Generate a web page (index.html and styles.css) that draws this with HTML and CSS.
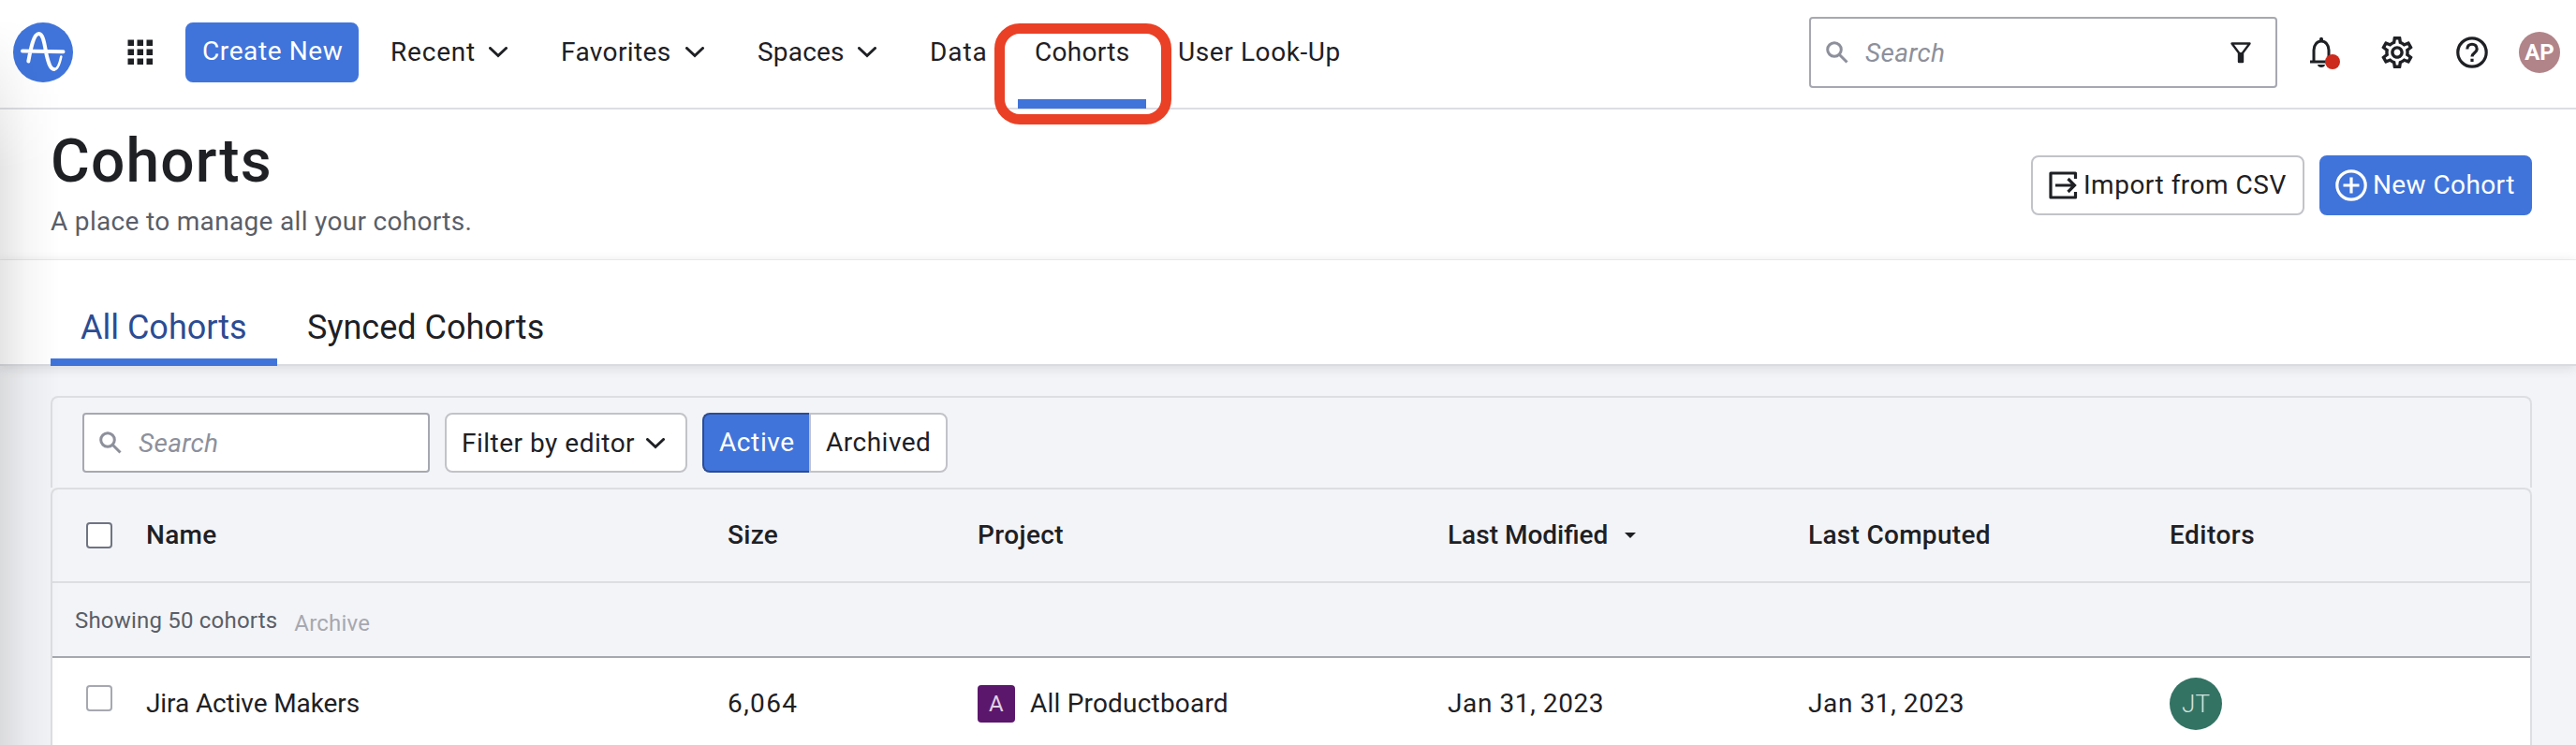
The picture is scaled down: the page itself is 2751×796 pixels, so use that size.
FILE: index.html
```
<!DOCTYPE html>
<html lang="en">

<head>
	<title>Cohorts</title>
	<meta charset="UTF-8">
	<link rel="stylesheet" href="styles.css">
	<meta name="viewport" content="width=device-width, initial-scale=1">
</head>

<body>
	<header class="topbar">
		<svg class="logo" width="64" height="64" viewBox="0 0 64 64">
			<circle cx="32" cy="32" r="32" fill="#4074da" />
			<path d="M10 30.500L53.500 31.300M16.300 41.500C18.500 30 21.500 12 27.500 12C33 12 34 28 36 36C38 44 40 50 43.500 50" fill="none" stroke="#fff" stroke-width="4" stroke-linecap="round" />
			<path d="M43.500 50.500C47.500 50.500 50 43 51.300 36.500" fill="none" stroke="#fff" stroke-width="2.600" stroke-linecap="round" />
		</svg>
		<svg class="apps" width="28" height="28" viewBox="0 0 28 28" fill="#1e2024">
			<path d="M.5.500h6.500v6.500H.5zM10.500.500H17v6.500h-6.500zM20.500.500H27v6.500h-6.500zM.5 10.500H7V17H.5zM10.500 10.500H17V17h-6.500zM20.500 10.500H27V17h-6.500zM.5 20.500H7V27H.5zM10.500 20.500H17V27h-6.500zM20.500 20.500H27V27h-6.500z" />
		</svg>
		<button class="btn btn-primary create">Create New</button>
		<nav class="nav">
			<a class="nav-item recent">Recent <svg class="chevron" width="20" height="12" viewBox="0 0 20 12"><path d="M1.500 1.500L10 9.500L18.500 1.500" /></svg></a>
			<a class="nav-item favorites">Favorites <svg class="chevron" width="20" height="12" viewBox="0 0 20 12"><path d="M1.500 1.500L10 9.500L18.500 1.500" /></svg></a>
			<a class="nav-item spaces">Spaces <svg class="chevron" width="20" height="12" viewBox="0 0 20 12"><path d="M1.500 1.500L10 9.500L18.500 1.500" /></svg></a>
			<a class="nav-item data">Data</a>
			<a class="nav-item current">Cohorts<span class="highlight"></span></a>
			<a class="nav-item lookup">User Look-Up</a>
		</nav>
		<div class="search global-search">
			<svg width="24" height="24" viewBox="0 0 24 24" fill="none" stroke="#8d909b" stroke-width="3"><circle cx="9" cy="9" r="7.300" /><path d="M14 14L22.500 22.500" /></svg>
			<span class="placeholder">Search</span>
			<svg class="funnel" width="24" height="24" viewBox="0 0 24 24"><path d="M2.500 2.500H21.500L14 12.500V22H10V12.500Z" fill="none" stroke="#1e2024" stroke-width="2.400" stroke-linejoin="round" /><path d="M9 12h6v10H9z" fill="#1e2024" /></svg>
		</div>
		<div class="bell">
			<svg width="28" height="34" viewBox="0 0 28 34"><path d="M5 26V14.500C5 9 8.500 5 13 5S21 9 21 14.500V26M1 27H25" fill="none" stroke="#1e2024" stroke-width="3" /><path d="M11 3c0-3 4-3 4 0v3h-4zM9 30h8c0 4-8 4-8 0z" fill="#1e2024" /></svg>
			<span class="dot"></span>
		</div>
		<svg class="gear" width="34" height="34" viewBox="2 2 20 20" fill="#1e2024"><path d="M19.430 12.980c.04-.32.07-.64.07-.98s-.03-.66-.07-.98l2.110-1.650c.19-.15.24-.42.120-.64l-2-3.460c-.12-.22-.39-.3-.61-.22l-2.490 1c-.52-.4-1.080-.73-1.690-.98l-.38-2.650C14.460 2.180 14.250 2 14 2h-4c-.25 0-.46.18-.49.42l-.38 2.650c-.61.25-1.170.59-1.690.98l-2.490-1c-.23-.09-.49 0-.61.22l-2 3.460c-.13.22-.07.49.12.64l2.110 1.650c-.04.32-.07.65-.07.98s.03.66.07.98l-2.110 1.650c-.19.15-.24.42-.12.64l2 3.460c.12.22.39.3.61.22l2.490-1c.52.4 1.080.73 1.690.98l.38 2.650c.03.24.24.42.49.42h4c.25 0 .46-.18.49-.42l.38-2.650c.61-.25 1.170-.59 1.690-.98l2.490 1c.23.09.49 0 .61-.22l2-3.460c.12-.22.07-.49-.12-.64l-2.110-1.650zm-1.980-1.710c.04.31.05.52.05.73s-.02.43-.05.73l-.14 1.130.89.7 1.080.84-.7 1.210-1.270-.51-1.040-.42-.9.68c-.43.32-.84.56-1.250.73l-1.060.43-.16 1.130-.2 1.350h-1.400l-.19-1.350-.16-1.130-1.060-.43c-.43-.18-.83-.41-1.230-.71l-.91-.7-1.060.43-1.270.51-.7-1.210 1.080-.84.89-.7-.14-1.130c-.03-.31-.05-.54-.05-.74s.02-.43.05-.73l.14-1.130-.89-.7-1.080-.84.7-1.210 1.270.51 1.040.42.9-.68c.43-.32.84-.56 1.250-.73l1.060-.43.16-1.130.2-1.350h1.390l.19 1.350.16 1.130 1.060.43c.43.18.83.41 1.230.71l.91.7 1.060-.43 1.270-.51.7 1.210-1.070.85-.89.7.14 1.130zM12 8c-2.210 0-4 1.790-4 4s1.790 4 4 4 4-1.790 4-4-1.790-4-4-4zm0 6c-1.100 0-2-.9-2-2s.9-2 2-2 2 .9 2 2-.9 2-2 2z" /></svg>
		<svg class="help" width="34" height="34" viewBox="0 0 34 34" fill="none" stroke="#1e2024" stroke-width="3.200"><circle cx="17" cy="17" r="15.200" /><path d="M11.800 13.500C11.800 6.500 22.200 6.500 22.200 13.500C22.200 17.500 17 17.500 17 21.500M17 23.700V27" /></svg>
		<span class="avatar me">AP</span>
	</header>

	<section class="page-head">
		<div class="page-title">
			<h1>Cohorts</h1>
			<p>A place to manage all your cohorts.</p>
		</div>
		<button class="btn import">
			<svg width="32" height="32" viewBox="0 0 32 32" fill="none" stroke="#1e2024" stroke-width="3.200"><path d="M29.500 9V3H3V29H29.500V23" stroke-linejoin="round" /><path d="M8 16H28M21.500 9L28.500 16L21.500 23" /></svg>
			<span>Import from CSV</span>
		</button>
		<button class="btn btn-primary new-cohort">
			<svg width="34" height="34" viewBox="0 0 34 34" fill="none" stroke="#fff" stroke-width="3.200"><circle cx="17" cy="17" r="15.200" /><path d="M17 8.500V25.500M8.500 17H25.500" /></svg>
			<span>New Cohort</span>
		</button>
	</section>

	<div class="tabs">
		<a class="tab tab-active">All Cohorts</a>
		<a class="tab">Synced Cohorts</a>
	</div>

	<main class="content">
		<div class="filters">
			<div class="search">
				<svg width="24" height="24" viewBox="0 0 24 24" fill="none" stroke="#8d909b" stroke-width="3"><circle cx="9" cy="9" r="7.300" /><path d="M14 14L22.500 22.500" /></svg>
				<span class="placeholder">Search</span>
			</div>
			<button class="btn by-editor">Filter by editor <svg class="chevron" width="20" height="12" viewBox="0 0 20 12"><path d="M1.500 1.500L10 9.500L18.500 1.500" /></svg></button>
			<div class="segment">
				<button class="btn seg-active">Active</button>
				<button class="btn seg-archived">Archived</button>
			</div>
		</div>

		<div class="table">
			<div class="row table-head">
				<span class="checkbox"></span>
				<span>Name</span>
				<span>Size</span>
				<span class="th-project">Project</span>
				<span class="th-modified">Last Modified <i class="sort"></i></span>
				<span>Last Computed</span>
				<span class="th-editors">Editors</span>
			</div>
			<div class="summary">
				<span>Showing 50 cohorts</span>
				<span class="archive">Archive</span>
			</div>
			<div class="row table-row">
				<span class="checkbox"></span>
				<span class="name">Jira Active Makers</span>
				<span class="size">6,064</span>
				<span class="project"><b class="badge">A</b>All Productboard</span>
				<span class="date">Jan 31, 2023</span>
				<span class="date">Jan 31, 2023</span>
				<span class="avatar editor">JT</span>
			</div>
		</div>
	</main>
	<div class="edge-shadow"></div>
</body>

</html>
```
FILE: styles.css
```
* {
	box-sizing: border-box;
}

body {
	position: relative;
	margin: 0;
	height: 796px;
	overflow: hidden;
	background: #fff;
	color: #1e2024;
	font-family: Roboto, "Liberation Sans", sans-serif;
	font-size: 28px;
	line-height: 40px;
}

svg {
	flex: none;
	display: block;
}

.btn {
	display: flex;
	align-items: center;
	height: 64px;
	padding: 0 18px;
	border: 2px solid #c2c3c9;
	border-radius: 8px;
	background: #fff;
	color: #1e2024;
	font: inherit;
	white-space: nowrap;
}

.btn-primary {
	border-color: #4074da;
	background: #4074da;
	color: #fff;
}

.chevron {
	fill: none;
	stroke: #1e2024;
	stroke-width: 3;
	stroke-linecap: round;
}

/* top bar */
.topbar {
	display: flex;
	align-items: center;
	height: 117px;
	padding: 0 17px 3px 14px;
	border-bottom: 2px solid #dddde4;
}

.apps {
	margin-left: 58px;
}

.create {
	width: 185px;
	margin-left: 34px;
	padding: 0 0 2px 16px;
	letter-spacing: 0.6px;
}

.nav {
	display: flex;
	margin-left: 34px;
}

.nav-item {
	display: flex;
	align-items: center;
	justify-content: space-between;
	white-space: nowrap;
	margin-top: -1px;
}

.recent {
	width: 125px;
	letter-spacing: 0.8px;
}

.favorites {
	width: 153px;
	margin-left: 57px;
	letter-spacing: 0.4px;
}

.spaces {
	width: 127px;
	margin-left: 57px;
	letter-spacing: 0.2px;
}

.data {
	width: 60px;
	margin-left: 57px;
	letter-spacing: 0.9px;
}

.current {
	position: relative;
	width: 100px;
	margin-left: 52px;
	letter-spacing: 0.3px;
}

.current::after {
	content: "";
	position: absolute;
	left: -18px;
	top: 70px;
	width: 137px;
	height: 10px;
	background: #4074da;
}

.highlight {
	position: absolute;
	z-index: 1;
	left: -43px;
	top: -11px;
	width: 189px;
	height: 108px;
	border: 11px solid #ea4025;
	border-radius: 27px;
}

.lookup {
	margin-left: 53px;
	letter-spacing: 0.6px;
}

.search {
	display: flex;
	align-items: center;
	width: 371px;
	height: 64px;
	padding: 0 16px;
	border: 2px solid #a6a8b1;
	border-radius: 4px;
	background: #fff;
}

.placeholder {
	margin: 1px 0 0 18px;
	color: #8d909b;
	font-style: italic;
	letter-spacing: 0.3px;
}

.global-search {
	width: 500px;
	height: 76px;
	margin-left: auto;
	padding: 0 25px 0 16px;
}

.funnel {
	margin-left: auto;
}

.bell {
	position: relative;
	margin-left: 34px;
}

.dot {
	position: absolute;
	left: 17px;
	top: 19px;
	width: 16px;
	height: 16px;
	border-radius: 50%;
	background: #cb2a1c;
}

.gear {
	margin-left: 49px;
}

.help {
	margin-left: 46px;
}

.avatar {
	display: flex;
	align-items: center;
	justify-content: center;
	border-radius: 50%;
}

.me {
	width: 44px;
	height: 44px;
	margin-left: 33px;
	background: #b18489;
	color: #fff;
	font-size: 24px;
	font-weight: 700;
}

/* page header */
.page-head {
	display: flex;
	align-items: flex-start;
	height: 161px;
	padding: 20px 47px 0 54px;
	border-bottom: 1px solid #f1f1f3;
}

.page-title {
	margin-right: auto;
}

.page-title h1 {
	margin: 0;
	font-size: 64px;
	font-weight: 500;
	line-height: 72px;
	letter-spacing: 1.2px;
}

.page-title p {
	margin: 8px 0 0;
	color: #5a5e68;
	letter-spacing: 0.32px;
}

.import {
	width: 292px;
	margin-top: 29px;
	padding: 0 0 1px 16px;
	letter-spacing: 0.5px;
}

.import span,
.new-cohort span {
	margin-left: 6px;
}

.new-cohort {
	width: 227px;
	margin: 29px 0 0 16px;
	padding: 0 0 1px 15px;
	letter-spacing: 0.4px;
}

.tabs {
	position: relative;
	display: flex;
	align-items: flex-end;
	height: 113px;
	padding-left: 54px;
	box-shadow: inset 0 -2px 0 #d9dbe0, 0 2px 12px rgba(30, 32, 36, 0.12);
}

.tab {
	height: 82px;
	padding: 8px 32px 0;
	border-bottom: 8px solid transparent;
	font-size: 36px;
	line-height: 66px;
	white-space: nowrap;
}

.tab-active {
	width: 242px;
	border-color: #4074da;
	color: #2c4c93;
}

/* cohort list */
.content {
	height: 405px;
	padding: 32px 47px 0 54px;
	background: #f3f4f7;
}

.filters {
	display: flex;
	gap: 16px;
	height: 98px;
	padding: 16px 32px 0;
	border: 2px solid #dddee1;
	border-bottom: none;
	border-radius: 8px 8px 0 0;
}

.by-editor {
	justify-content: space-between;
	width: 259px;
	padding: 1px 22px 0 16px;
	letter-spacing: 0.5px;
}

.segment {
	display: flex;
}

.seg-active {
	width: 114px;
	padding: 0 0 1px 16px;
	border-color: #2c4c93;
	border-right: none;
	border-radius: 8px 0 0 8px;
	background: #4074da;
	color: #fff;
	letter-spacing: 0.6px;
}

.seg-archived {
	width: 148px;
	padding: 0 0 1px 16px;
	border-radius: 0 8px 8px 0;
	letter-spacing: 0.5px;
}

.table {
	height: 290px;
	border: 2px solid #dddee1;
	border-bottom: none;
	border-radius: 8px 8px 0 0;
}

.row {
	display: grid;
	grid-template-columns: 100px 621px 267px 502px 385px 386px 1fr;
	align-items: center;
}

.table-head {
	height: 100px;
	border-bottom: 2px solid #dddee1;
	font-weight: 500;
	letter-spacing: 0.3px;
}

.th-project {
	letter-spacing: 0.4px;
}

.th-modified {
	letter-spacing: 0;
}

.th-editors {
	letter-spacing: 0.5px;
}

.sort {
	display: inline-block;
	margin: 0 0 6px 11px;
	border: 6px solid transparent;
	border-top-color: #1e2024;
	border-bottom: none;
}

.checkbox {
	width: 28px;
	height: 28px;
	margin-left: 36px;
	border: 2px solid #6f7482;
	border-radius: 4px;
	background: #fff;
}

.summary {
	display: flex;
	align-items: center;
	height: 80px;
	padding: 1px 0 0 24px;
	border-bottom: 2px solid #a6a8b1;
	color: #5a5e68;
	font-size: 24px;
	letter-spacing: 0.2px;
}

.archive {
	margin: 6px 0 0 18px;
	color: #a6a8b1;
}

.table-row {
	height: 108px;
	padding-bottom: 10px;
	background: #fff;
}

.table-row .checkbox {
	margin-bottom: 12px;
	border-color: #a6a8b1;
}

.name {
	letter-spacing: -0.1px;
}

.size {
	letter-spacing: 1.4px;
}

.project {
	display: flex;
	align-items: center;
	letter-spacing: 0.2px;
}

.badge {
	width: 40px;
	height: 40px;
	margin-right: 16px;
	border-radius: 4px;
	background: #5b176c;
	color: #e0d0e3;
	font-size: 24px;
	font-weight: 400;
	text-align: center;
}

.date {
	letter-spacing: 0.6px;
}

.editor {
	width: 56px;
	height: 56px;
	background: #337364;
	color: #d4e2df;
	font-size: 26px;
	font-weight: 300;
}

/* soft dark strip along the left window edge */
.edge-shadow {
	position: absolute;
	left: 0;
	top: 0;
	width: 64px;
	height: 796px;
	background: linear-gradient(to right, rgba(0, 0, 0, 0.1), rgba(0, 0, 0, 0.035) 45%, transparent);
	-webkit-mask-image: linear-gradient(transparent 20px, #000 180px);
	mask-image: linear-gradient(transparent 20px, #000 180px);
}
```
